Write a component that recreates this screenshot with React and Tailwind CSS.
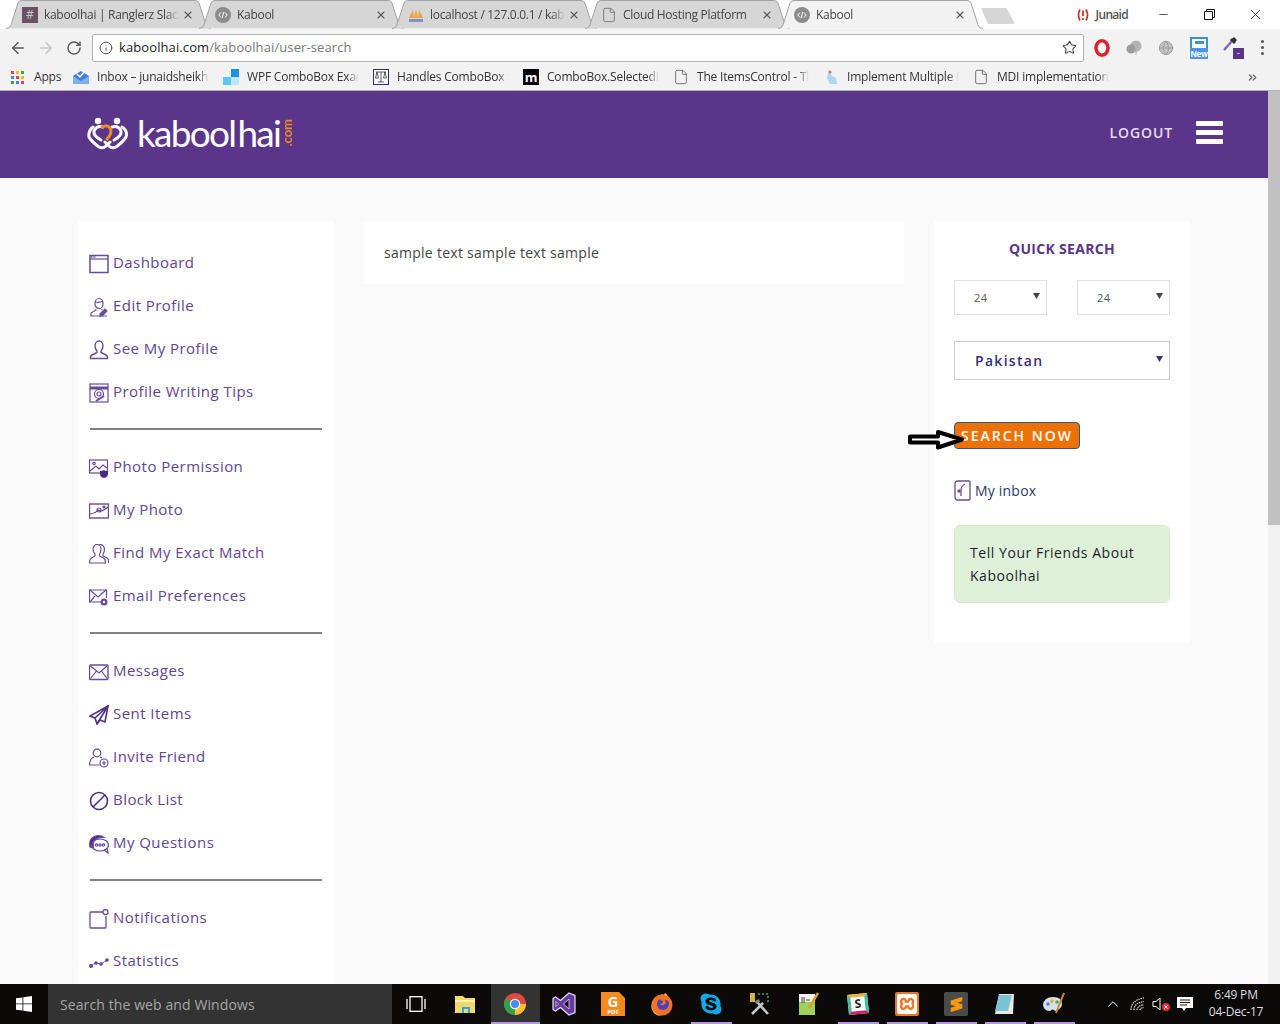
import { ArrowLeft, ArrowRight, RotateCw, Star, Info, File, ChevronsRight, Minus, X, Globe, ChevronUp } from 'lucide-react';
import { FaSkype } from 'react-icons/fa';
import { SiXampp, SiSublimetext } from 'react-icons/si';

const uiFont = "font-['Open_Sans',sans-serif]";
const purple = '#674a9c';

function HashIcon() {
    return (
        <div className="flex w-4 h-4 items-center justify-center bg-[#6a5263] text-[12px] leading-none text-[#cfc5cc]">#</div>
    );
}

function CodeIcon() {
    return (
        <svg width="16" height="16" viewBox="0 0 16 16">
            <circle cx="8" cy="8" r="8" fill="#8c8c8c" />
            <path d="M6 5.5 3.8 8 6 10.5M10 5.5 12.2 8 10 10.5M8.8 5 7.2 11" fill="none" stroke="#fff" strokeWidth="1" />
        </svg>
    );
}

function PmaIcon() {
    return (
        <svg width="16" height="16" viewBox="0 0 16 16">
            <path d="M1 11 5 3l1 8zM6 11l2-9 2 9zM10 11 11 3l4 8z" fill="#f0a23c" />
            <path d="M1 12h14v3H1z" fill="#7d8fc4" />
        </svg>
    );
}

const tabs = [
    { title: 'kaboolhai | Ranglerz Slack', icon: <HashIcon /> },
    { title: 'Kabool', icon: <CodeIcon /> },
    { title: 'localhost / 127.0.0.1 / kaboolhai', icon: <PmaIcon /> },
    { title: 'Cloud Hosting Platform', icon: <File size={16} strokeWidth={1.2} color="#666" /> },
    { title: 'Kabool', icon: <CodeIcon />, active: true },
];

function Tab({ title, icon, active }) {
    return (
        <div className={`relative w-[205px] h-[29px] -mr-[12px] shrink-0 ${active ? 'z-10' : ''}`}>
            <svg className="absolute inset-0" width="205" height="29" viewBox="0 0 205 29">
                <path
                    d="M0 28.5Q4 28.5 5 25L12 3Q13 .5 16 .5H189Q192 .5 193 3L200 25Q201 28.5 205 28.5"
                    fill={active ? '#f2f2f2' : '#d6d6d6'}
                    stroke="#a3a3a3"
                />
            </svg>
            <div className="relative flex h-[29px] items-center pl-4 pr-[17px]">
                <div className="w-4 shrink-0">{icon}</div>
                <span className="ml-[6px] w-[135px] overflow-hidden whitespace-nowrap text-xs tracking-[-0.3px] text-[#444] [mask-image:linear-gradient(to_right,black_90%,transparent)]">
                    {title}
                </span>
                <X size={12} strokeWidth={2.2} color="#5a5a5a" className="ml-auto" />
            </div>
        </div>
    );
}

function TabStrip() {
    return (
        <div className="flex h-[29px] shrink-0 bg-white pl-[6px]">
            {tabs.map((t, i) => (
                <Tab key={i} {...t} />
            ))}
            <svg className="ml-[10px] mt-[7px]" width="34" height="18" viewBox="0 0 34 18">
                <path d="M1 1H24Q25.500 1 26 2L33 15Q33.500 17 32 17H8Q7 17 6.500 16L.5 2Q.2 1 1 1Z" fill="#d6d6d6" />
            </svg>
            <div className="ml-auto flex items-start">
                <div className="mt-[7px] mr-[12px] flex items-center gap-[6px]">
                    <svg width="14" height="14" viewBox="0 0 14 14" fill="none" stroke="#c9362c" strokeWidth="1.800">
                        <path d="M4 1.500Q1 7 4 12.500M10 1.500Q13 7 10 12.500M7 2.500V8M7 10v2" />
                    </svg>
                    <span className="text-xs font-semibold tracking-[-0.7px] text-[#555]">Junaid</span>
                </div>
                <div className="flex h-[29px] w-[46px] items-center justify-center pl-[1px]">
                    <Minus size={13} strokeWidth={1.3} color="#111" />
                </div>
                <div className="flex h-[29px] w-[46px] items-center justify-center">
                    <svg width="11" height="11" viewBox="0 0 11 11" fill="none" stroke="#111">
                        <path d="M.5 2.500h8v8h-8zM2.500 2.500v-2h8v8h-2" />
                    </svg>
                </div>
                <div className="flex h-[29px] w-[46px] mr-[2px] items-center justify-center">
                    <X size={17} strokeWidth={1.1} color="#111" />
                </div>
            </div>
        </div>
    );
}

function Toolbar() {
    return (
        <div className="flex h-[37px] shrink-0 items-center bg-[#f2f2f2]">
            <div className="flex w-[92px] items-center pl-[9px] gap-[10px]">
                <ArrowLeft size={18} strokeWidth={2} color="#5a5a5a" />
                <ArrowRight size={18} strokeWidth={2} color="#c6c6c6" />
                <RotateCw size={16} strokeWidth={2.2} color="#5a5a5a" className="ml-[1px]" />
            </div>
            <div className="flex h-[28px] w-[992px] items-center rounded-[2px] border border-[#b4b4b4] bg-white pl-[6px] pr-[6px]">
                <Info size={14} strokeWidth={1.7} color="#555" />
                <span className="ml-[6px] text-[13px] tracking-[0.1px] text-[#222]">
                    kaboolhai.com<span className="text-[#777]">/kaboolhai/user-search</span>
                </span>
                <Star size={15} strokeWidth={1.7} color="#444" className="ml-auto" />
            </div>
            <div className="ml-[10px] flex items-center">
                <div className="flex w-[16px] h-[18px] items-center justify-center">
                    <svg width="16" height="18" viewBox="0 0 16 18">
                        <ellipse cx="8" cy="9" rx="6" ry="7.200" fill="#fff" stroke="#e0202a" strokeWidth="3.500" />
                    </svg>
                </div>
                <svg className="ml-[16px]" width="16" height="16" viewBox="0 0 16 16" fill="#b3b3b3">
                    <circle cx="10" cy="6" r="5.500" />
                    <circle cx="5" cy="9" r="4.500" fill="#9c9c9c" />
                    <path d="M9 11h2l-1 5z" />
                </svg>
                <Globe className="ml-[16px]" size={16} strokeWidth={1.400} color="#9a9a9a" fill="#c4c4c4" />
                <div className="ml-[16px] w-[18px]">
                    <div className="h-[11px] border-x-2 border-t-2 border-[#3e8edc] bg-white">
                        <div className="ml-[3px] mt-[2px] h-[3px] w-[9px] bg-[#3e8edc]"></div>
                    </div>
                    <div className="h-[11px] overflow-hidden bg-[#4c94ec] text-center text-[8px] font-bold leading-[11px] tracking-[-0.3px] text-white">New</div>
                </div>
                <div className="relative ml-[15px] h-[22px] w-[21px]">
                    <svg width="14" height="14" viewBox="0 0 14 14">
                        <path d="M1 13 9 4" stroke="#8a63b8" strokeWidth="2.500" />
                        <path d="M8 2 12 6M10 1l3 3" stroke="#333" strokeWidth="3" />
                    </svg>
                    <div className="absolute bottom-0 right-0 h-[11px] w-[11px] bg-[#5a3589] text-center text-[9px] leading-[10px] text-white">-</div>
                </div>
                <div className="ml-[17px] flex flex-col gap-[3px]">
                    <span className="h-[3px] w-[3px] rounded-full bg-[#555]"></span>
                    <span className="h-[3px] w-[3px] rounded-full bg-[#555]"></span>
                    <span className="h-[3px] w-[3px] rounded-full bg-[#555]"></span>
                </div>
            </div>
        </div>
    );
}

function AppsIcon() {
    const colors = ['#ea4335', '#fbbc05', '#34a853', '#4285f4', '#ea4335', '#fbbc05', '#34a853', '#4285f4', '#ea4335'];
    return (
        <div className="grid w-[13px] grid-cols-3 gap-[2px]">
            {colors.map((c, i) => (
                <span key={i} className="h-[3px] w-[3px]" style={{ background: c }}></span>
            ))}
        </div>
    );
}

const bookmarks = [
    {
        title: 'Inbox – junaidsheikh.r',
        icon: (
            <svg width="16" height="16" viewBox="0 0 16 16">
                <path d="M0 7 8 2l8 5v8H0z" fill="#3f7fd8" />
                <path d="M0 7l8 5 8-5v8H0z" fill="#7fb0ee" />
                <path d="M4 5l3 3 5-6" fill="none" stroke="#fff" strokeWidth="1.500" />
            </svg>
        ),
    },
    {
        title: 'WPF ComboBox Example',
        icon: (
            <div className="grid h-4 w-4 grid-cols-2">
                <span></span>
                <span className="bg-[#1d8fe0]"></span>
                <span className="bg-[#5cc8ee]"></span>
                <span className="bg-[#bfe6f8]"></span>
            </div>
        ),
    },
    {
        title: 'Handles ComboBox Selected',
        icon: (
            <svg width="16" height="16" viewBox="0 0 16 16" fill="none">
                <rect x=".5" y=".5" width="15" height="15" fill="#fff" stroke="#2a2a9a" />
                <path d="M3 3h10M8 3v10M5 13h6M4 3 2.500 9h3zM12 3l-1.500 6h3z" stroke="#333" strokeWidth=".8" />
            </svg>
        ),
    },
    {
        title: 'ComboBox.SelectedItem',
        icon: (
            <div className="flex h-4 w-4 items-center justify-center bg-black text-[13px] font-bold leading-none text-white">m</div>
        ),
    },
    { title: 'The ItemsControl - The', icon: <File size={16} strokeWidth={1.200} color="#555" /> },
    {
        title: 'Implement Multiple Doc',
        icon: (
            <svg width="16" height="16" viewBox="0 0 16 16">
                <path d="M6 1 9 7l4 2 1 6H7L4 9z" fill="#a8d8f4" />
                <circle cx="7" cy="3" r="1.500" fill="#e86a50" />
            </svg>
        ),
    },
    { title: 'MDI implementation', icon: <File size={16} strokeWidth={1.200} color="#555" /> },
];

function BookmarksBar() {
    return (
        <div className="flex h-[25px] shrink-0 items-center border-b border-[#b4b4b4] bg-[#f2f2f2] pb-[2px] pl-[11px] text-xs tracking-[-0.2px] text-[#333]">
            <AppsIcon />
            <span className="ml-[10px] w-[39px]">Apps</span>
            {bookmarks.map((b) => (
                <div key={b.title} className="flex w-[150px] shrink-0 items-center">
                    <div className="w-4 shrink-0">{b.icon}</div>
                    <span className="ml-2 w-[112px] overflow-hidden whitespace-nowrap [mask-image:linear-gradient(to_right,black_90%,transparent)]">
                        {b.title}
                    </span>
                </div>
            ))}
            <ChevronsRight size={13} strokeWidth={2} color="#555" className="ml-[123px]" />
        </div>
    );
}

function Logo() {
    return (
        <div className="flex items-center">
            <svg width="42" height="34" viewBox="0 0 42 34" fill="none">
                <circle cx="11" cy="5" r="3.200" fill="#fff" />
                <circle cx="30" cy="5" r="3.200" fill="#fff" />
                <path d="M6 11Q1 15 2 21Q4 25 12 31Q16 33 19 30L23 26" stroke="#fff" strokeWidth="3" strokeLinecap="round" />
                <path d="M16 11Q10 9 7 15Q6 20 14 24" stroke="#fff" strokeWidth="3" strokeLinecap="round" />
                <path d="M35 11Q41 15 39 21Q37 25 29 31Q25 33 22 30L18 26" stroke="#fff" strokeWidth="3" strokeLinecap="round" />
                <path d="M25 11Q31 9 34 15Q35 20 27 24" stroke="#fff" strokeWidth="3" strokeLinecap="round" />
                <path d="M15 11Q20 8 23 12Q26 17 20 23" stroke="#f08a24" strokeWidth="3" strokeLinecap="round" />
            </svg>
            <span className="ml-[8px] font-['Lato',sans-serif] text-[37px] font-normal leading-none tracking-[-1.7px] text-white">
                kabool<span className="ml-[2px]">hai</span>
            </span>
            <span className="ml-[1px] rotate-180 font-['Lato',sans-serif] text-[13px] font-bold leading-none text-[#f08a24] [writing-mode:vertical-rl]">
                .com
            </span>
        </div>
    );
}

function Header() {
    return (
        <header className="flex h-[87px] items-center bg-[#5a3589] pb-[4px] pl-[87px] pr-[45px]">
            <Logo />
            <span className="ml-auto mt-[1px] text-sm font-semibold tracking-[0.9px] text-[#e6dcf0]">LOGOUT</span>
            <div className="ml-[23px] flex w-[27px] flex-col gap-[4px]">
                <span className="h-[5px] rounded-[1px] bg-white"></span>
                <span className="h-[5px] rounded-[1px] bg-white"></span>
                <span className="h-[5px] rounded-[1px] bg-white"></span>
            </div>
        </header>
    );
}

// sidebar icons, drawn by hand from the reference
const icon = { fill: 'none', stroke: purple, strokeWidth: 1.200 };

const sideIcons = {
    dashboard: (
        <svg width="20" height="20" viewBox="0 0 20 20" {...icon}>
            <rect x="1" y="1.500" width="18" height="17" strokeWidth="1.500" />
            <path d="M1 5h18" />
            <path d="M2 3h5" strokeDasharray="1 .6" strokeWidth="1.500" />
        </svg>
    ),
    edit: (
        <svg width="20" height="20" viewBox="0 0 20 20" {...icon}>
            <path d="M6 6a4 4.500 0 0 1 8 0v1a4 4.500 0 0 1-8 0zM6 5q4 1 8-1" />
            <path d="M7 12v1l-5 3v3h16M13 12v1" />
            <path d="M11 17l5-5 2 2-5 5h-2z" fill={purple} />
        </svg>
    ),
    profile: (
        <svg width="20" height="20" viewBox="0 0 20 20" {...icon} strokeWidth="1.400">
            <path d="M6 6a4 5 0 0 1 8 0q0 3-2 5v1.500l5 2.500q2 1 1.500 3.500h-17Q1 16 3 15l5-2.500V11Q6 9 6 6z" />
        </svg>
    ),
    tips: (
        <svg width="20" height="20" viewBox="0 0 20 20" {...icon}>
            <rect x="1" y="1" width="18" height="18" />
            <path d="M1 5h18" strokeWidth="3" />
            <circle cx="10" cy="11" r="4.500" />
            <circle cx="10" cy="11" r="2" />
            <path d="M7 18l8-5" strokeWidth="2" />
        </svg>
    ),
    permission: (
        <svg width="20" height="20" viewBox="0 0 20 20" {...icon}>
            <rect x=".5" y="2" width="18" height="13" />
            <circle cx="5" cy="5.500" r="1.200" />
            <path d="M1 13l6-5 3 3 4-4 4 3" />
            <path d="M11 13q3 0 4-1 1 1 4 1v3q0 3-4 4-4-1-4-4z" fill="#4a2a80" stroke="none" />
        </svg>
    ),
    photo: (
        <svg width="20" height="20" viewBox="0 0 20 20" {...icon}>
            <rect x=".5" y="3" width="19" height="14" strokeWidth="1.400" />
            <path d="M1 13q6-1 8-4 3 3 10-3" />
            <circle cx="10" cy="9" r="2" />
            <circle cx="15" cy="6" r="1" fill={purple} />
        </svg>
    ),
    match: (
        <svg width="20" height="20" viewBox="0 0 20 20" {...icon}>
            <path d="M4 5a4 4.500 0 0 1 8 0q0 3-1.500 5v2l4 2q2 1 2 5H.5q0-4 2-5l3.500-2v-2Q4 8 4 5z" />
            <path d="M10 1a4 4.500 0 0 1 5.500 4q0 3-1.500 5v2l4 2q2 1 1.500 5" />
        </svg>
    ),
    email: (
        <svg width="20" height="20" viewBox="0 0 20 20" {...icon}>
            <path d="M12 15H.5V3h17v8" />
            <path d="M1 3l8 7 8-7M1 15l5-6" />
            <circle cx="15" cy="15" r="3.500" fill={purple} stroke="none" />
            <circle cx="15" cy="15" r="1.200" fill="#fff" stroke="none" />
        </svg>
    ),
    messages: (
        <svg width="20" height="20" viewBox="0 0 20 20" {...icon}>
            <rect x=".5" y="3" width="18.500" height="14.500" rx="1" strokeWidth="1.400" />
            <path d="M1.500 4 10 11l8-7M1.500 16.500 7.500 9M18 16.500 12.500 9" />
        </svg>
    ),
    sent: (
        <svg width="20" height="20" viewBox="0 0 20 20" {...icon} stroke="#4f2f86" strokeWidth="1.600">
            <path d="M19 1 1 11l5 2 2 6 3-4 5 2z" />
            <path d="M19 1 6 13M19 1 8 19" />
        </svg>
    ),
    invite: (
        <svg width="20" height="20" viewBox="0 0 20 20" {...icon}>
            <circle cx="8" cy="5" r="3.800" />
            <path d="M5 9q-4 1-4.500 8h10M11 9l2 1" />
            <circle cx="15" cy="15" r="4" />
            <path d="M15 13v4M13 15h4" />
        </svg>
    ),
    block: (
        <svg width="20" height="20" viewBox="0 0 20 20" {...icon} stroke="#4f2f86" strokeWidth="1.600">
            <circle cx="10" cy="10" r="8.500" />
            <path d="M4 16 16 4" />
        </svg>
    ),
    questions: (
        <svg width="20" height="20" viewBox="0 0 20 20" {...icon}>
            <path d="M1 13Q-1 3 9 1.500q4 0 6 2Q7 3 4.500 8 4 11 4.500 14z" fill="#4f2f86" />
            <ellipse cx="11" cy="11" rx="8.500" ry="6" />
            <path d="M15 16l4 3-1-5" />
            <circle cx="7.500" cy="11" r="1.200" />
            <circle cx="11" cy="11" r="1.200" />
            <circle cx="14.500" cy="11" r="1.200" />
        </svg>
    ),
    notifications: (
        <svg width="20" height="20" viewBox="0 0 20 20" {...icon} strokeWidth="1.300">
            <path d="M14 3H2q-1 0-1 1v14q0 1 1 1h14q1 0 1-1V7" />
            <circle cx="16.500" cy="3" r="2.500" />
        </svg>
    ),
    statistics: (
        <svg width="20" height="20" viewBox="0 0 20 20" {...icon}>
            <path d="M1 14l6-3 5 1 6-4" strokeDasharray="3 1" />
            <circle cx="2" cy="14" r="1.400" fill={purple} />
            <circle cx="7" cy="11" r="1.200" fill={purple} />
            <circle cx="12" cy="12" r="1.200" fill={purple} />
            <circle cx="18" cy="8" r="1.200" fill={purple} />
        </svg>
    ),
};

const sideGroups = [
    {
        mb: 'mb-[15px]',
        items: [
            ['Dashboard', 'dashboard'],
            ['Edit Profile', 'edit'],
            ['See My Profile', 'profile'],
            ['Profile Writing Tips', 'tips'],
        ],
    },
    {
        mb: 'mb-[15px]',
        items: [
            ['Photo Permission', 'permission'],
            ['My Photo', 'photo'],
            ['Find My Exact Match', 'match'],
            ['Email Preferences', 'email'],
        ],
    },
    {
        mb: 'mb-[15px]',
        items: [
            ['Messages', 'messages'],
            ['Sent Items', 'sent'],
            ['Invite Friend', 'invite'],
            ['Block List', 'block'],
            ['My Questions', 'questions'],
        ],
    },
    {
        items: [
            ['Notifications', 'notifications'],
            ['Statistics', 'statistics'],
        ],
    },
];

function Sidebar() {
    return (
        <aside className="w-[256px] shrink-0 bg-white pt-5 pb-8">
            {sideGroups.map((group, i) => (
                <div key={i} className={group.mb}>
                    {group.items.map(([label, key]) => (
                        <div key={label} className="flex h-[43px] items-center pl-[10px] text-[15px] tracking-[0.45px] text-[#5f4594]">
                            <span className="ml-[1px] mt-[3px] w-[24px] shrink-0">{sideIcons[key]}</span>
                            {label}
                        </div>
                    ))}
                    {group.mb && <div className="ml-3 mr-3 mt-[15px] h-[2px] bg-[#808080]"></div>}
                </div>
            ))}
        </aside>
    );
}

function Caret({ color }) {
    return (
        <svg width="7" height="6" viewBox="0 0 7 6">
            <path d="M0 0h7L3.500 6z" fill={color} />
        </svg>
    );
}

function QuickSearch() {
    return (
        <aside className="relative h-[422px] w-[256px] shrink-0 bg-white px-5 pt-[18px]">
            <h3 className="text-center text-sm font-bold leading-[19px] tracking-[0.3px] text-[#5a3589]">QUICK SEARCH</h3>
            <div className="mt-[22px] flex justify-between">
                {[0, 1].map((i) => (
                    <div key={i} className="flex h-[35px] w-[93px] items-center justify-between border border-[#e0e0e0] pl-[19px] pr-[6px] text-[11px] tracking-[0.4px] text-[#555]">
                        <span className="mt-[1px]">24</span>
                        <span className="-mt-[3px]"><Caret color="#444" /></span>
                    </div>
                ))}
            </div>
            <div className="mt-[26px] flex h-[39px] items-center justify-between border border-[#cccccc] pl-5 pr-[6px] text-sm font-semibold tracking-[1.3px] text-[#3b2f80]">
                Pakistan
                <span className="-mt-[3px]"><Caret color="#3b2f80" /></span>
            </div>
            <button className="mt-[42px] block h-[27px] w-[126px] rounded-[4px] border border-[#2b5a8a] bg-[#ee7203] pl-[6px] text-left text-sm font-semibold tracking-[2px] text-white">
                SEARCH NOW
            </button>
            <div className="mt-[31px] flex items-center text-sm tracking-[0.2px] text-[#2a3a6a]">
                <svg width="17" height="21" viewBox="0 0 17 21" fill="none" stroke={purple} strokeWidth="1.300">
                    <path d="M4 1h11q1 0 1 1v17q0 1-1 1H4q-3 0-3-3V4q0-3 3-3z" />
                    <path d="M11 4Q7 6 7 10v6" />
                    <circle cx="5" cy="11" r="1" fill={purple} />
                </svg>
                <span className="ml-[4px]">My inbox</span>
            </div>
            <div className="mt-[24px] h-[78px] rounded-md border border-[#d6e9c6] bg-[#dff0d8] px-[15px] pt-[15px] text-sm font-medium leading-[23px] tracking-[0.55px] text-[#1d1d2e]">
                Tell Your Friends About Kaboolhai
            </div>
            {/* hand drawn arrow from the screenshot, sits over the button */}
            <svg className="absolute left-[-27px] top-[207px]" width="60" height="24" viewBox="0 0 60 24">
                <path d="M3 8.500H31V4L55 11.500 31 19.500V14.500H3z" fill="#fff" stroke="#000" strokeWidth="4" strokeLinejoin="round" />
            </svg>
        </aside>
    );
}

function Page() {
    return (
        <div className="flex min-h-0 flex-1">
            <div className="w-[1268px] overflow-hidden bg-[#fafafa]">
                <Header />
                <div className="flex items-start gap-[30px] pl-[78px] pt-[43px]">
                    <Sidebar />
                    <main className="h-[63px] w-[540px] shrink-0 bg-white pl-5 pt-[21px] text-sm leading-[22px] tracking-[0.27px] text-[#444]">
                        sample text sample text sample
                    </main>
                    <QuickSearch />
                </div>
            </div>
            <div className="w-3 bg-[#f1f1f1]">
                <div className="h-[434px] bg-[#c1c1c1]"></div>
            </div>
        </div>
    );
}

function ChromeLogo() {
    return (
        <svg width="22" height="22" viewBox="0 0 22 22">
            <circle cx="11" cy="11" r="11" fill="#dd4b3e" />
            <path d="M11 11 1.500 5.500A11 11 0 0 0 11 22l5-8z" fill="#2fa24f" />
            <path d="M11 11h11a11 11 0 0 1-11 11z" fill="#fbc02d" />
            <circle cx="11" cy="11" r="5.200" fill="#fff" />
            <circle cx="11" cy="11" r="4" fill="#4a8bf0" />
        </svg>
    );
}

function VsLogo() {
    return (
        <svg width="24" height="24" viewBox="0 0 24 24">
            <path d="M17 1 23 3.500V20.500L17 23 8.500 15.500 3.500 19 1 17.500V6.500L3.500 5 8.500 8.500z" fill="#6a3aa8" stroke="#e8e0f2" strokeWidth="1.200" />
            <path d="M17 7 11.500 12 17 17zM4 9.500V14.500L6.500 12z" fill="#0b0a08" stroke="#e8e0f2" strokeWidth=".8" />
        </svg>
    );
}

function FirefoxLogo() {
    return (
        <svg width="22" height="24" viewBox="0 0 22 24">
            <circle cx="11" cy="13" r="10.500" fill="#f5701f" />
            <path d="M.8 13A10.500 10.500 0 0 0 11 23.500 9 9 0 0 1 2.500 9z" fill="#fbc02d" />
            <circle cx="12" cy="12" r="6" fill="#4c3fc4" />
            <path d="M10 2Q20 2 20 12 19 8 14 8q2 3-1 5-3 1-4-1 3 0 3-3-5 0-2-7z" fill="#f5701f" />
            <path d="M14 1q2 1 3 4-2-2-4-2z" fill="#fbc02d" />
        </svg>
    );
}

function PdfTile() {
    return (
        <div className="relative flex h-[24px] w-[24px] flex-col items-center justify-center bg-[#f58a1f] text-white [clip-path:polygon(0_0,75%_0,100%_25%,100%_100%,0_100%)]">
            <span className="mt-[2px] text-[15px] font-bold leading-[13px]">G</span>
            <span className="text-[6px] font-bold leading-[8px]">PDF</span>
        </div>
    );
}

function SlackTile() {
    return (
        <div className="flex h-[20px] w-[20px] -rotate-6 items-center justify-center border-[3px] border-t-[#e9b23c] border-r-[#36c5a8] border-b-[#d81e5b] border-l-[#4db6a0] bg-white text-[12px] font-bold leading-none text-[#222]">
            S
        </div>
    );
}

const taskApps = [
    {
        icon: (
            <svg width="22" height="20" viewBox="0 0 22 20">
                <path d="M0 2h8l2 2h10v15H0z" fill="#f5d76e" />
                <path d="M0 6h20v2H0z" fill="#fff2b0" />
                <path d="M7 13h8v6H7z" fill="#23a9e6" />
                <path d="M9 15h4v4H9z" fill="#f5d76e" />
            </svg>
        ),
    },
    { icon: <ChromeLogo />, active: true, line: true },
    { icon: <VsLogo /> },
    { icon: <PdfTile /> },
    { icon: <FirefoxLogo /> },
    { icon: <FaSkype size={24} color="#18a5e6" />, line: true },
    {
        icon: (
            <svg width="24" height="24" viewBox="0 0 24 24" fill="none">
                <path d="M2 1h5v9H2z" fill="#d8b04c" />
                <path d="M10 2h10v10" stroke="#5a9a3c" strokeDasharray="2 2" strokeWidth="1.500" />
                <path d="M4 22 15 11M20 22 9 10" stroke="#c8c8c8" strokeWidth="2.500" />
                <path d="M7 9l4-2 1 3-4 2z" fill="#888" />
            </svg>
        ),
    },
    {
        icon: (
            <svg width="22" height="24" viewBox="0 0 22 24">
                <path d="M1 2h16v21H1z" fill="#9fd05a" />
                <path d="M1 2h16v8H1z" fill="#f3f3f0" />
                <path d="M4 5v6M6 5v6M8 8h4" stroke="#444" strokeWidth="1" />
                <path d="M11 16 20 1" stroke="#d8a21e" strokeWidth="2.500" />
            </svg>
        ),
    },
    { icon: <SlackTile />, line: true },
    {
        icon: (
            <div className="flex h-[24px] w-[24px] items-center justify-center rounded-[2px] bg-[#e8762c]">
                <SiXampp size={20} color="#fff" />
            </div>
        ),
        line: true,
    },
    {
        icon: (
            <div className="flex h-[24px] w-[24px] items-center justify-center rounded-[2px] bg-[#4a4a4a]">
                <SiSublimetext size={15} color="#ff9800" />
            </div>
        ),
        line: true,
    },
    {
        icon: (
            <svg width="24" height="24" viewBox="0 0 24 24">
                <path d="M6 2h15l-1 20H2z" fill="#e8e8e0" />
                <path d="M6 3h13L15 19H2z" fill="#7cc3d6" />
            </svg>
        ),
        line: true,
    },
    {
        icon: (
            <svg width="24" height="24" viewBox="0 0 24 24">
                <path d="M1 13Q2 5 11 5q9 0 9 7 0 5-7 7-2-3-5 0-6 0-7-6z" fill="#d8dfe8" />
                <circle cx="6" cy="12" r="1.800" fill="#3c8cd8" />
                <circle cx="10" cy="9" r="1.800" fill="#e0b020" />
                <circle cx="15" cy="10" r="1.800" fill="#5aa84c" />
                <path d="M22 1 14 21" stroke="#c88a3c" strokeWidth="2" />
            </svg>
        ),
        line: true,
    },
];

function Taskbar() {
    return (
        <footer className="flex h-10 shrink-0 items-stretch bg-[#0b0a08] text-white">
            <div className="flex w-12 items-center justify-center">
                <svg width="16" height="16" viewBox="0 0 16 16" fill="#fff">
                    <path d="M0 2.300 6.500 1.400V7.500H0zM7.300 1.300 16 0V7.500H7.300zM0 8.300H6.500V14.600L0 13.700zM7.300 8.300H16V16L7.300 14.700z" />
                </svg>
            </div>
            <div className="flex w-[344px] items-center bg-[#333] pl-3 pt-[2px] text-sm tracking-[0.1px] text-[#a6a6a6]">
                Search the web and Windows
            </div>
            <div className="flex w-[50px] items-center justify-center pr-[3px]">
                <svg width="20" height="16" viewBox="0 0 20 16" fill="none" stroke="#fff" strokeWidth="1.300">
                    <rect x="4" y=".7" width="12" height="14.600" />
                    <path d="M1 3v10M19 3v10" />
                </svg>
            </div>
            {taskApps.map((app, i) => (
                <div key={i} className={`relative flex w-[49px] items-center justify-center pr-[1px] ${app.active ? 'bg-[#333]' : ''}`}>
                    {app.icon}
                    {app.line && (
                        <span className={`absolute bottom-0 h-[2px] bg-[#b497e0] ${app.active ? 'inset-x-0' : 'inset-x-[4px]'}`}></span>
                    )}
                </div>
            ))}
            <div className="ml-[25px] flex items-center">
                <ChevronUp size={18} strokeWidth={1.300} color="#fff" />
                <svg className="ml-[8px]" width="16" height="14" viewBox="0 0 16 14" fill="none" stroke="#ddd" strokeWidth="1.200">
                    <path d="M1 13Q1 3 14 1M4 13Q4 6 14 4.500M7 13q0-4 7-5.500M10 13q0-2 4-2.500" strokeDasharray="1.500 .8" />
                </svg>
                <svg className="ml-[6px]" width="20" height="16" viewBox="0 0 20 16">
                    <path d="M1 5.500h3L8 2v12L4 10.500H1z" fill="none" stroke="#fff" />
                    <circle cx="14" cy="11" r="4" fill="#e03030" />
                    <path d="M12.500 9.500l3 3M15.500 9.500l-3 3" stroke="#fff" />
                </svg>
                <svg className="ml-[5px]" width="16" height="16" viewBox="0 0 16 16">
                    <path d="M0 1h16v11H9l-2 3-2-3H0z" fill="#fff" />
                    <path d="M3 4h10M3 6.500h10M3 9h7" stroke="#111" />
                </svg>
            </div>
            <div className="ml-[6px] flex w-[74px] flex-col items-center justify-center pb-[2px] text-xs leading-[17px] tracking-[-0.2px] text-[#ddd]">
                <span>6:49 PM</span>
                <span>04-Dec-17</span>
            </div>
        </footer>
    );
}

export default function App() {
    return (
        <div className={`flex h-[1024px] w-[1280px] flex-col overflow-hidden ${uiFont}`}>
            <TabStrip />
            <Toolbar />
            <BookmarksBar />
            <Page />
            <Taskbar />
        </div>
    );
}
